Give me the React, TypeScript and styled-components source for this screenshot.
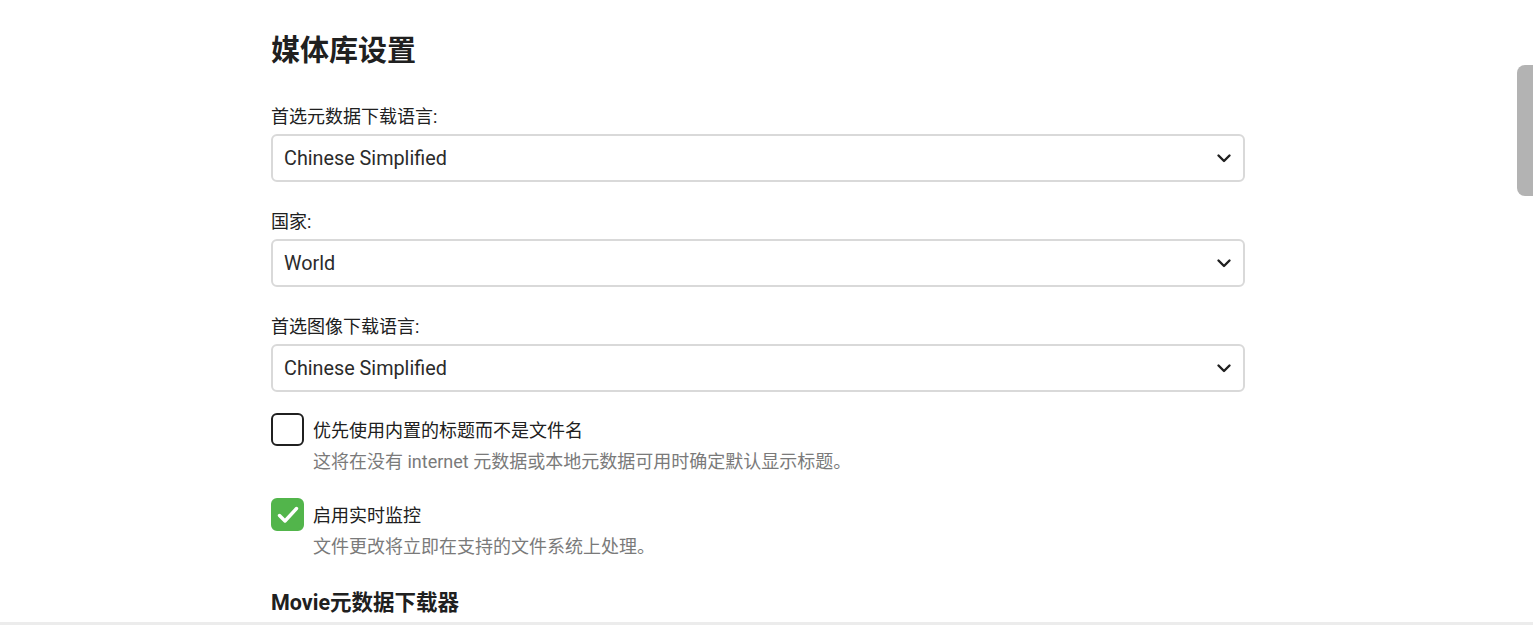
import React from "react";
import styled, { createGlobalStyle } from "styled-components";

const GlobalStyle = createGlobalStyle`
  html, body {
    margin: 0;
    padding: 0;
    background: #ffffff;
    overflow: hidden;
  }
  body {
    font-family: Roboto, "Noto Sans CJK SC", "Noto Sans", sans-serif;
    color: #202020;
  }
`;

const Page = styled.div`
  position: relative;
  width: 1533px;
  height: 641px;
  overflow: hidden;
`;

const Content = styled.div`
  width: 974px;
  margin-left: 271px;
  padding-top: 33px;
  display: flex;
  flex-direction: column;
`;

const Title = styled.h2`
  margin: 0 0 36px;
  font-size: 29px;
  line-height: 36px;
  font-weight: 700;
`;

const SubTitle = styled.h3`
  margin: 30px 0 0;
  font-size: 21.5px;
  line-height: 28px;
  font-weight: 700;
`;

const Field = styled.div<{ $gap: number }>`
  display: flex;
  flex-direction: column;
  margin-bottom: ${(p) => p.$gap}px;
`;

const Label = styled.label`
  font-size: 18px;
  line-height: 24px;
  margin-bottom: 5px;
`;

const SelectBox = styled.div`
  height: 44px;
  border: 2px solid #d9d9d9;
  border-radius: 6px;
  display: flex;
  align-items: center;
  justify-content: space-between;
  padding: 0 11px 0 11px;
  font-size: 19.8px;
  color: #2b2b2b;
`;

const CheckRow = styled.div<{ $gap: number }>`
  display: grid;
  grid-template-columns: 33px 1fr;
  column-gap: 9px;
  margin-bottom: ${(p) => p.$gap}px;
`;

const Box = styled.div<{ $checked: boolean }>`
  width: 33px;
  height: 33px;
  box-sizing: border-box;
  border-radius: 6px;
  border: 2px solid ${(p) => (p.$checked ? "#52b54b" : "#202020")};
  background: ${(p) => (p.$checked ? "#52b54b" : "#ffffff")};
  display: flex;
  align-items: center;
  justify-content: center;
`;

const CheckText = styled.div`
  font-size: 18px;
  line-height: 24px;
  padding-top: 6px;
`;

const Desc = styled.div`
  grid-column: 2;
  font-size: 18px;
  line-height: 24px;
  color: #7a7a7a;
  margin-top: 4px;
`;

const Thumb = styled.div`
  position: absolute;
  right: 0;
  top: 65px;
  width: 16px;
  height: 131px;
  border-radius: 8px 0 0 8px;
  background: #b3b3b3;
`;

const BottomLine = styled.div`
  position: absolute;
  left: 0;
  right: 0;
  top: 622px;
  height: 3px;
  background: #ececec;
`;

const Chevron = () => (
  <svg width="16" height="16" viewBox="0 0 16 16" fill="none">
    <path d="M2.5 5.5 L8 11 L13.5 5.5" stroke="#202020" strokeWidth="2.4" strokeLinecap="round" strokeLinejoin="round" />
  </svg>
);

const Tick = () => (
  <svg width="24" height="24" viewBox="0 0 24 24" fill="none">
    <path d="M3.5 12.5 L9 18 L20.5 5.5" stroke="#ffffff" strokeWidth="3.4" strokeLinecap="round" strokeLinejoin="round" />
  </svg>
);

const fields = [
  { label: "首选元数据下载语言:", value: "Chinese Simplified", gap: 28 },
  { label: "国家:", value: "World", gap: 28 },
  { label: "首选图像下载语言:", value: "Chinese Simplified", gap: 21 },
];

const checks = [
  {
    checked: false,
    label: "优先使用内置的标题而不是文件名",
    desc: "这将在没有 internet 元数据或本地元数据可用时确定默认显示标题。",
    gap: 24,
  },
  {
    checked: true,
    label: "启用实时监控",
    desc: "文件更改将立即在支持的文件系统上处理。",
    gap: 0,
  },
];

export default function App() {
  return (
    <Page>
      <GlobalStyle />
      <Content>
        <Title>媒体库设置</Title>
        {fields.map((f, i) => (
          <Field key={i} $gap={f.gap}>
            <Label>{f.label}</Label>
            <SelectBox>
              <span>{f.value}</span>
              <Chevron />
            </SelectBox>
          </Field>
        ))}
        {checks.map((c, i) => (
          <CheckRow key={i} $gap={c.gap}>
            <Box $checked={c.checked}>{c.checked && <Tick />}</Box>
            <CheckText>{c.label}</CheckText>
            <Desc>{c.desc}</Desc>
          </CheckRow>
        ))}
        <SubTitle>Movie元数据下载器</SubTitle>
      </Content>
      <BottomLine />
      <Thumb />
    </Page>
  );
}
